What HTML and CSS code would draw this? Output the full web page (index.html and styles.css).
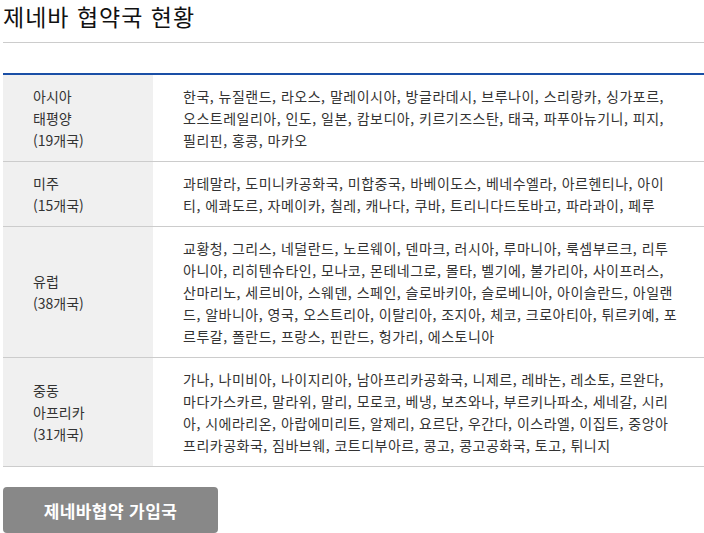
FILE: index.html
```html
<!DOCTYPE html>
<html lang="ko">
<head>
  <meta charset="UTF-8">
  <title>제네바 협약국 현황</title>
  <link rel="stylesheet" href="styles.css">
</head>
<body>

<div class="status-box">
  <h2 class="status-title">제네바 협약국 현황</h2>

  <table class="country-table">
    <tr>
      <th>아시아<br>태평양<br>(19개국)</th>
      <td>한국, 뉴질랜드, 라오스, 말레이시아, 방글라데시, 브루나이, 스리랑카, 싱가포르, 오스트레일리아, 인도, 일본, 캄보디아, 키르기즈스탄, 태국, 파푸아뉴기니, 피지, 필리핀, 홍콩, 마카오</td>
    </tr>
    <tr>
      <th>미주<br>(15개국)</th>
      <td>과테말라, 도미니카공화국, 미합중국, 바베이도스, 베네수엘라, 아르헨티나, 아이티, 에콰도르, 자메이카, 칠레, 캐나다, 쿠바, 트리니다드토바고, 파라과이, 페루</td>
    </tr>
    <tr>
      <th>유럽<br>(38개국)</th>
      <td>교황청, 그리스, 네덜란드, 노르웨이, 덴마크, 러시아, 루마니아, 룩셈부르크, 리투아니아, 리히텐슈타인, 모나코, 몬테네그로, 몰타, 벨기에, 불가리아, 사이프러스, 산마리노, 세르비아, 스웨덴, 스페인, 슬로바키아, 슬로베니아, 아이슬란드, 아일랜드, 알바니아, 영국, 오스트리아, 이탈리아, 조지아, 체코, 크로아티아, 튀르키예, 포르투갈, 폴란드, 프랑스, 핀란드, 헝가리, 에스토니아</td>
    </tr>
    <tr>
      <th>중동<br>아프리카<br>(31개국)</th>
      <td>가나, 나미비아, 나이지리아, 남아프리카공화국, 니제르, 레바논, 레소토, 르완다, 마다가스카르, 말라위, 말리, 모로코, 베냉, 보츠와나, 부르키나파소, 세네갈, 시리아, 시에라리온, 아랍에미리트, 알제리, 요르단, 우간다, 이스라엘, 이집트, 중앙아프리카공화국, 짐바브웨, 코트디부아르, 콩고, 콩고공화국, 토고, 튀니지</td>
    </tr>
  </table>

  <button class="join-btn">제네바협약 가입국</button>
</div>

</body>
</html>
```

FILE: styles.css
```css
body {
  font-family: "Noto Sans CJK KR", "Noto Sans", sans-serif;
  color: #333;
  background: #fff;
  margin: 0 0 0 3px;
}

.status-title {
  margin: 0;
  padding: 0 0 9px;
  font-size: 23px;
  line-height: 33px;
  font-weight: normal;
  letter-spacing: 1px;
  color: #111;
  border-bottom: 1px solid #ccc;
}

.country-table {
  width: 100%;
  margin-top: 30px;
  border-collapse: collapse;
  border-top: 2px solid #1a4fa6;
  font-size: 14px;
  line-height: 22px;
  letter-spacing: 0.5px;
}

.country-table th,
.country-table td {
  padding: 10px 25px 10px 30px;
  border-bottom: 1px solid #ccc;
  text-align: left;
  vertical-align: middle;
}

.country-table th {
  width: 95px;
  background: #f0f0f0;
  font-weight: normal;
  letter-spacing: 0;
}

.join-btn {
  display: block;
  margin-top: 20px;
  width: 215px;
  height: 46px;
  padding: 0;
  background: #888;
  color: #fff;
  border: none;
  border-radius: 4px;
  font-family: inherit;
  font-size: 17px;
  font-weight: bold;
  letter-spacing: 0.4px;
  cursor: pointer;
}
```
